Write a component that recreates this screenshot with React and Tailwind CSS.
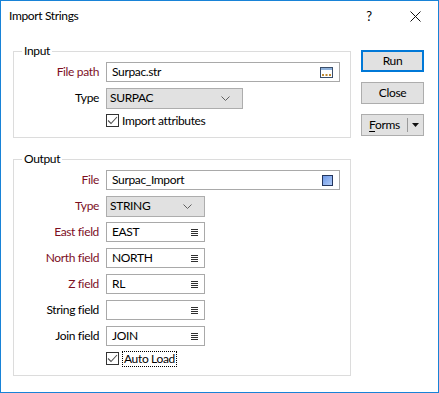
import React from 'react'

const font = { fontFamily: 'Lato, "Noto Sans", sans-serif' }

function Chevron() {
  return (
    <svg width="9" height="5" viewBox="0 0 9 5" className="shrink-0">
      <path d="M0.5 0.5 L4.5 4.5 L8.5 0.5" fill="none" stroke="#606060" strokeWidth="1" />
    </svg>
  )
}

function ListIcon() {
  return (
    <svg width="7" height="7" viewBox="0 0 7 7" className="shrink-0">
      {[0.5, 2.5, 4.5, 6.5].map((y) => (
        <line key={y} x1="0" x2="7" y1={y} y2={y} stroke="#303030" strokeWidth="1" />
      ))}
    </svg>
  )
}

function BrowseIcon() {
  return (
    <svg width="13" height="11" viewBox="0 0 13 11" className="shrink-0">
      <rect x="0.5" y="0.5" width="12" height="10" fill="#ffffff" stroke="#3b4f6b" />
      <rect x="1" y="1" width="11" height="2" fill="#8fb2dc" />
      <rect x="2" y="7" width="2" height="2" fill="#c08a30" />
      <rect x="5.5" y="7" width="2" height="2" fill="#c08a30" />
      <rect x="9" y="7" width="2" height="2" fill="#c08a30" />
    </svg>
  )
}

function ColorSquare() {
  return (
    <svg width="11" height="11" viewBox="0 0 11 11" className="shrink-0">
      <defs>
        <linearGradient id="sq" x1="0" y1="0" x2="1" y2="1">
          <stop offset="0" stopColor="#6a96e6" />
          <stop offset="1" stopColor="#b3cdf7" />
        </linearGradient>
      </defs>
      <rect x="0.5" y="0.5" width="10" height="10" fill="url(#sq)" stroke="#24365e" />
    </svg>
  )
}

function Check() {
  return (
    <span className="w-[13px] h-[13px] border border-[#333333] bg-white flex items-center justify-center shrink-0">
      <svg width="11" height="11" viewBox="0 0 11 11">
        <path d="M1 5.5 L4 8.5 L10 2" fill="none" stroke="#505050" strokeWidth="1.1" />
      </svg>
    </span>
  )
}

function Row({ label, red, children }) {
  return (
    <div className="flex items-center h-[20px]">
      <span className={`w-[86px] text-right pr-[1px] ${red ? 'text-[#7d0f1f]' : 'text-black'}`}>{label}</span>
      <div className="ml-[6px] flex">{children}</div>
    </div>
  )
}

function TextBox({ value, width, icon }) {
  return (
    <div className={`h-[20px] ${width} border border-[#a9a9a9] bg-white flex items-center pl-[5px] pr-[6px]`}>
      <span className="flex-1 text-black">{value}</span>
      {icon}
    </div>
  )
}

function Combo({ value, width }) {
  return (
    <div className={`h-[21px] ${width} border border-[#adadad] bg-[#e1e1e1] flex items-center pl-[3px] pr-[12px]`}>
      <span className="flex-1 text-black">{value}</span>
      <Chevron />
    </div>
  )
}

function Group({ title, children, className }) {
  return (
    <div className={`relative border border-[#dcdcdc] ${className}`}>
      <span className="absolute -top-[7px] left-[8px] bg-white px-[2px] text-black">{title}</span>
      {children}
    </div>
  )
}

function Btn({ children, primary }) {
  return (
    <div
      className={`w-[63px] h-[22px] flex items-center justify-center bg-[#e1e1e1] ${
        primary ? 'border-2 border-[#0078d7]' : 'border border-[#adadad]'
      }`}
    >
      {children}
    </div>
  )
}

export default function App() {
  return (
    <div style={font} className="w-[439px] h-[393px] bg-white border border-[#1883d7] text-[12px] leading-none tracking-[-0.35px] flex flex-col">
      <div className="h-[30px] flex items-center pl-[8px] shrink-0">
        <span className="flex-1 text-black text-[12px]">Import Strings</span>
        <span className="w-[46px] text-center text-[13px] text-black">?</span>
        <span className="w-[46px] flex items-center justify-center">
          <svg width="11" height="11" viewBox="0 0 11 11">
            <path d="M0.5 0.5 L10.5 10.5 M10.5 0.5 L0.5 10.5" stroke="#111" strokeWidth="1" />
          </svg>
        </span>
      </div>

      <div className="flex pl-[12px]">
        <div className="flex flex-col pt-[20px] w-[338px]">
          <Group title="Input" className="pt-[10px] pb-[10px] flex flex-col gap-[6px]">
            <Row label="File path" red>
              <TextBox value="Surpac.str" width="w-[234px]" icon={<BrowseIcon />} />
            </Row>
            <Row label="Type">
              <Combo value="SURPAC" width="w-[137px]" />
            </Row>
            <div className="flex items-center h-[13px] pl-[92px] gap-[3px]">
              <Check />
              <span className="text-black">Import attributes</span>
            </div>
          </Group>

          <Group title="Output" className="mt-[21px] pt-[10px] pb-[10px] flex flex-col gap-[6px]">
            <Row label="File" red>
              <TextBox value="Surpac_Import" width="w-[234px]" icon={<ColorSquare />} />
            </Row>
            <Row label="Type" red>
              <Combo value="STRING" width="w-[99px]" />
            </Row>
            <Row label="East field" red>
              <TextBox value="EAST" width="w-[99px]" icon={<ListIcon />} />
            </Row>
            <Row label="North field" red>
              <TextBox value="NORTH" width="w-[99px]" icon={<ListIcon />} />
            </Row>
            <Row label="Z field" red>
              <TextBox value="RL" width="w-[99px]" icon={<ListIcon />} />
            </Row>
            <Row label="String field">
              <TextBox value="" width="w-[99px]" icon={<ListIcon />} />
            </Row>
            <Row label="Join field">
              <TextBox value="JOIN" width="w-[99px]" icon={<ListIcon />} />
            </Row>
            <div className="flex items-center h-[13px] pl-[92px] gap-[3px]">
              <Check />
              <span className="text-black border border-dotted border-black px-[1px] py-[1px]">Auto Load</span>
            </div>
          </Group>
        </div>

        <div className="flex flex-col pt-[19px] pl-[10px] gap-[10px]">
          <Btn primary>Run</Btn>
          <Btn>Close</Btn>
          <div className="w-[63px] h-[22px] flex items-center bg-[#e1e1e1] border border-[#adadad]">
            <span className="flex-1 text-center text-black">
              <span className="underline underline-offset-2">F</span>orms
            </span>
            <span className="w-[1px] h-[14px] bg-[#9a9a9a]" />
            <span className="w-[15px] flex items-center justify-center">
              <svg width="7" height="4" viewBox="0 0 7 4">
                <path d="M0 0 L7 0 L3.5 4 Z" fill="#111" />
              </svg>
            </span>
          </div>
        </div>
      </div>
    </div>
  )
}
